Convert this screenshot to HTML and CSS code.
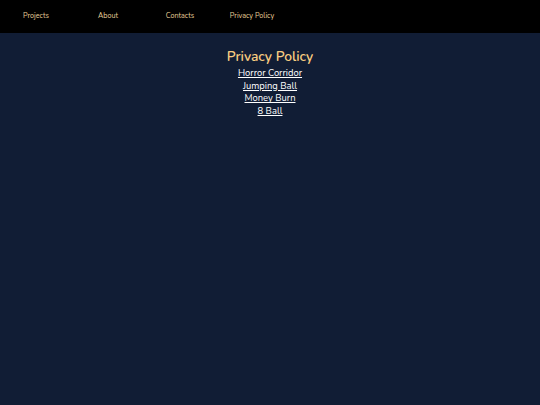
FILE: index.html
```html
<!DOCTYPE html>
<html>
<head>
<meta charset="utf-8">
<link rel="stylesheet" href="styles.css">
</head>
<body>
<nav class="nav">
  <a class="nav-item" href="#">Projects</a>
  <a class="nav-item" href="#">About</a>
  <a class="nav-item" href="#">Contacts</a>
  <a class="nav-item" href="#">Privacy Policy</a>
</nav>
<main class="content">
  <h1 class="title">Privacy Policy</h1>
  <ul class="links">
    <li><a href="#">Horror Corridor</a></li>
    <li><a href="#">Jumping Ball</a></li>
    <li><a href="#">Money Burn</a></li>
    <li><a href="#">8 Ball</a></li>
  </ul>
</main>
</body>
</html>
```

FILE: styles.css
```css
html, body {
  margin: 0;
  padding: 0;
  height: 100%;
}
body {
  background: #111d35;
  font-family: "Nunito", "Lato", "Open Sans", sans-serif;
}
.nav {
  display: flex;
  background: #000;
  height: 33px;
  align-items: center;
  padding-left: 0;
}
.nav-item {
  width: 72px;
  text-align: center;
  color: #e8cf98;
  font-size: 7.2px;
  text-decoration: none;
  margin-top: -1px;
}
.content {
  text-align: center;
  padding-top: 14px;
}
.title {
  margin: 0;
  color: #f8cc80;
  font-size: 13.8px;
  font-weight: 600;
  line-height: 20px;
}
.links {
  list-style: none;
  margin: 0;
  padding: 0;
}
.links li {
  font-size: 9.4px;
  line-height: 12.7px;
}
.links a {
  color: #ffffff;
  text-decoration: underline;
}
```
